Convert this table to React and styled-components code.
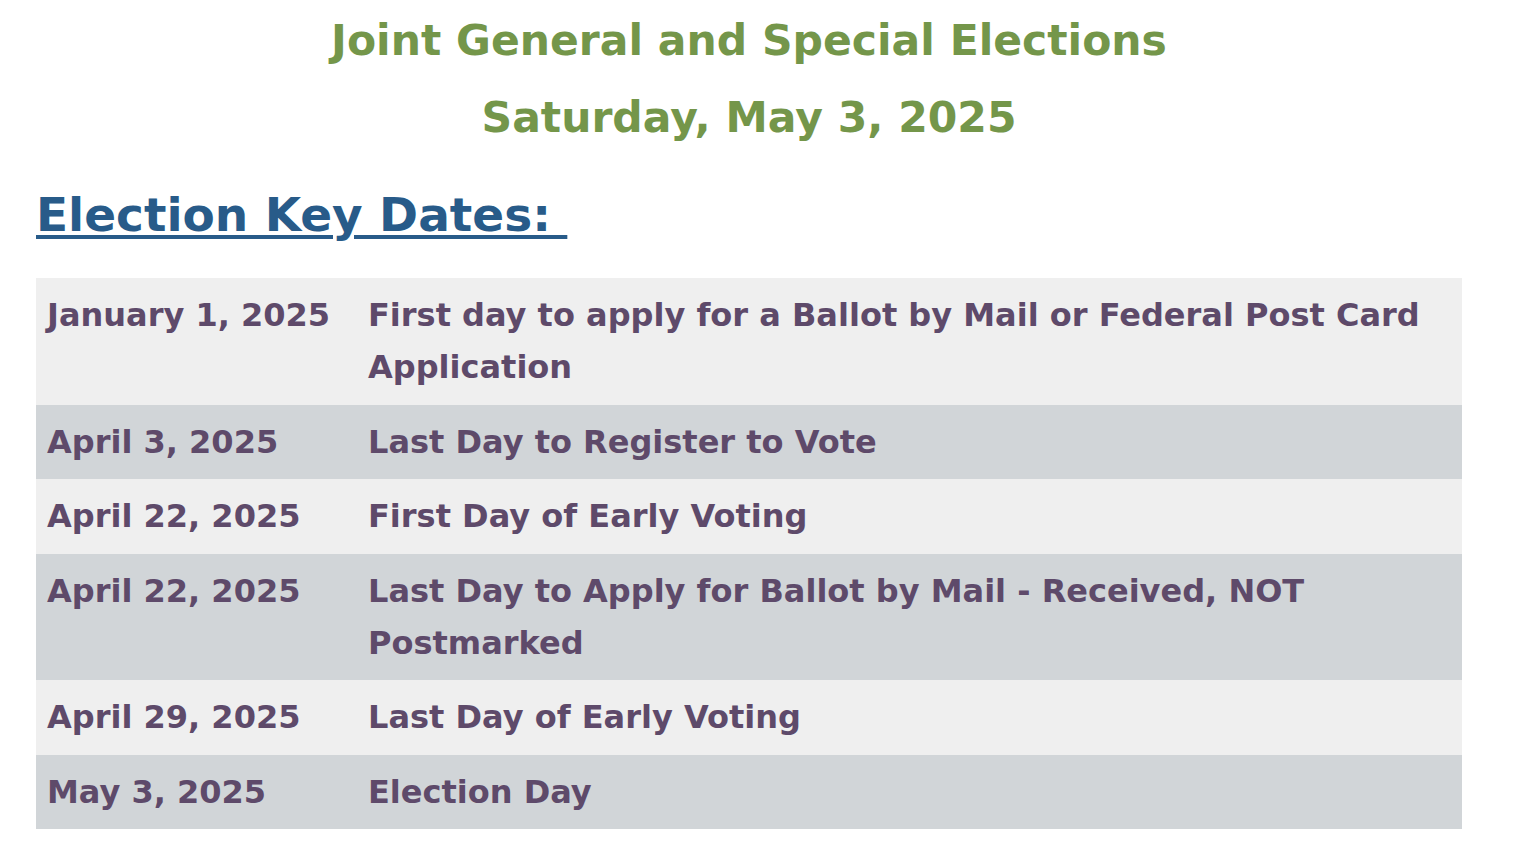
import React from "react";
import styled, { createGlobalStyle } from "styled-components";

const Global = createGlobalStyle`
  html, body { margin: 0; padding: 0; background: #ffffff; }
  body { font-family: "DejaVu Sans", "Liberation Sans", sans-serif; }
`;

const Page = styled.main`
  width: 1426px;
  padding: 2px 52px 0 36px;
  font-family: "DejaVu Sans", "Liberation Sans", sans-serif;
  font-weight: 700;
`;

const Title = styled.h1`
  margin: 0;
  text-align: center;
  color: #74964a;
  font-size: 42.5px;
  line-height: 77px;
  font-weight: 700;
`;

const Heading = styled.h2`
  margin: 29px 0 33px;
  color: #285b89;
  font-size: 47px;
  line-height: 60px;
  font-weight: 700;
  text-decoration: underline;
  text-decoration-thickness: 4px;
  text-underline-offset: 4px;
`;

const Table = styled.table`
  width: 1426px;
  border-collapse: collapse;
  border-spacing: 0;
`;

const Row = styled.tr`
  background: ${(p) => (p.$shade ? "#d1d5d8" : "#efefef")};
`;

const Cell = styled.td`
  padding: 11px 11px 11.5px;
  vertical-align: top;
  color: #5e4a6a;
  font-size: 32px;
  line-height: 52px;
  font-weight: 700;
  width: ${(p) => (p.$date ? "299px" : "auto")};
`;

const rows = [
  ["January 1, 2025", "First day to apply for a Ballot by Mail or Federal Post Card Application"],
  ["April 3, 2025", "Last Day to Register to Vote"],
  ["April 22, 2025", "First Day of Early Voting"],
  ["April 22, 2025", "Last Day to Apply for Ballot by Mail - Received, NOT Postmarked"],
  ["April 29, 2025", "Last Day of Early Voting"],
  ["May 3, 2025", "Election Day"],
];

export default function App() {
  return (
    <>
      <Global />
      <Page>
        <Title>
          Joint General and Special Elections
          <br />
          Saturday, May 3, 2025
        </Title>
        <Heading>{"Election Key Dates:\u00a0"}</Heading>
        <Table>
          <tbody>
            {rows.map(([d, t], i) => (
              <Row key={i} $shade={i % 2 === 1}>
                <Cell $date>{d}</Cell>
                <Cell>{t}</Cell>
              </Row>
            ))}
          </tbody>
        </Table>
      </Page>
    </>
  );
}
